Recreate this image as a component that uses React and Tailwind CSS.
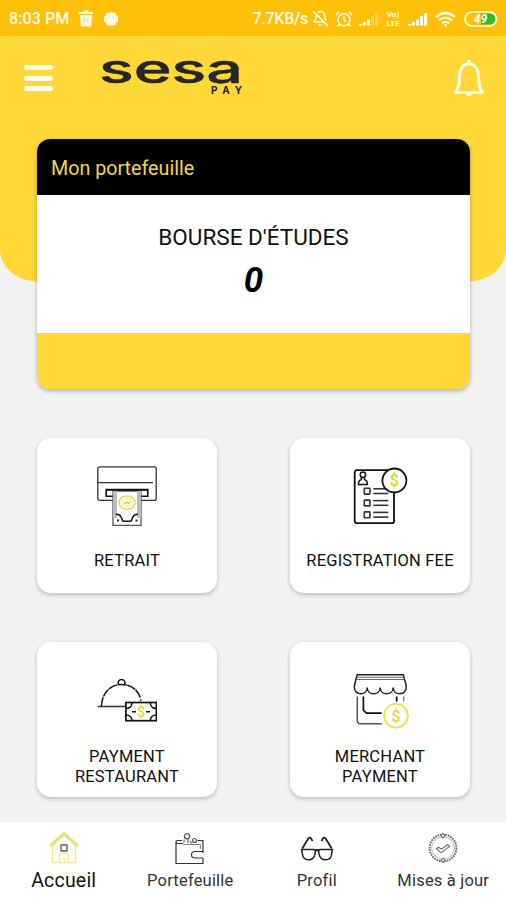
import { useState } from "react";
import { AlarmClock, BellOff } from "lucide-react";

const Dollar = ({ x, y, size = 14, fill = "#e3d21c" }) => (
  <text
    x={x}
    y={y}
    fontSize={size}
    fontWeight="500"
    textAnchor="middle"
    fill={fill}
    stroke="none"
    fontFamily="Roboto, sans-serif"
  >
    $
  </text>
);

const CashIcon = () => (
  <svg width="60" height="60" viewBox="0 0 60 60" fill="none" stroke="#333" strokeWidth="1.3">
    <rect x="0.8" y="0.8" width="58.4" height="33.6" rx="2" />
    <path d="M1 16.7h55" />
    <path d="M9.2 23.6h41.6v6.6H9.2z" stroke="#111" strokeWidth="1.6" />
    <path d="M16 25h28v34.3H16z" fill="#fff" stroke="#555" />
    <path d="M18 25v27M42 25v27" stroke="#bbb" strokeWidth="4" />
    <path d="M9 23.8h42" stroke="#111" strokeWidth="1.7" />
    <ellipse cx="30" cy="36.6" rx="8" ry="6.6" stroke="#e3dc4a" strokeWidth="1.6" />
    <ellipse cx="30" cy="36.6" rx="5" ry="4" stroke="#eee88a" strokeWidth="1" />
    <path d="M27 36.5l1.5 1 1.5-1.5 1.5 1.5 1.5-1.5" stroke="#d8cf30" />
    <path d="M19 48.2c3.5-.2 4.5 1 5.2 3l1.3 3.2q.4.9 1.4.9h6.2q1 0 1.4-.9l1.3-3.2c.7-2 1.7-3.2 5.2-3" stroke="#111" strokeWidth="1.5" />
    <path d="M20 54.5h2M38.5 54.5h2" stroke="#222" strokeWidth="1.8" />
  </svg>
);

const FormIcon = () => (
  <svg width="60" height="60" viewBox="0 0 60 60" fill="none" stroke="#111" strokeWidth="1.8">
    <rect x="4.7" y="4.2" width="39.3" height="53" rx="2" />
    <circle cx="12.9" cy="8.8" r="2.7" strokeWidth="1.5" />
    <path d="M11.3 11.3v2.2c-1.8.5-2.8 1.5-2.9 4.9h9c-.1-3.4-1.1-4.4-2.9-4.9v-2.2" strokeWidth="1.5" />
    {[25.2, 37, 48.8].map((y) => (
      <g key={y} stroke="#333">
        <rect x="14.3" y={y - 2.9} width="5.6" height="5.8" rx="0.5" strokeWidth="1.6" />
        <path d={`M23.3 ${y - 2.4}h15`} strokeWidth="1.6" />
        <path d={`M23.3 ${y + 2.3}h15`} strokeWidth="1.6" />
      </g>
    ))}
    <circle cx="44.4" cy="14.5" r="12" fill="#fff" />
    <Dollar x="44.4" y="20.2" size={16} />
  </svg>
);

const DishIcon = () => (
  <svg width="60" height="60" viewBox="0 0 60 60" fill="none" stroke="#111" strokeWidth="1.5">
    <path d="M0.7 36.5h28" stroke="#333" />
    <path d="M4.5 36c.2-12.5 8.7-21.6 20-21.6 9.3 0 16.3 5.5 18.7 13" strokeDasharray="9 .6" />
    <path d="M43.7 29.3v1.5" />
    <path d="M21.5 14.5c-1-2.8.7-5 3.1-5s4.1 2.2 3.1 5" />
    <rect x="28.9" y="32.5" width="30.5" height="18.2" fill="#fff" strokeWidth="1.7" />
    <path d="M29 38.5c3.5 0 6-2.3 6-6M59.3 38.5c-3.5 0-6-2.3-6-6M29 45c3.5 0 6 2.2 6 5.7M59.3 45c-3.5 0-6 2.2-6 5.7" strokeWidth="1.6" />
    <path d="M35 41.7h4M49 41.7h4" strokeWidth="1.6" />
    <Dollar x="43.9" y="46.6" size={14} fill="#d9e021" />
  </svg>
);

const ShopIcon = () => (
  <svg width="60" height="60" viewBox="0 0 60 60" fill="none" stroke="#222" strokeWidth="1.5">
    <path d="M4.3 16l2.8-11.3h46.2L56.3 16" />
    <path d="M6.5 7.3h47.2M6 9.5h48.2" stroke="#666" strokeWidth="1" />
    <path d="M4.3 15.5c-.4 5 2.3 8.3 6.4 8.3 3.9 0 6.5-2.6 6.5-6.3 0 3.7 2.7 6.3 6.5 6.3s6.5-2.6 6.5-6.3c0 3.7 2.7 6.3 6.5 6.3s6.5-2.6 6.5-6.3c0 3.7 2.7 6.3 6.5 6.3 4.4 0 7-3.3 6.6-8.3" />
    <path d="M7.3 26.5v25.2l2 2h22.4" stroke="#555" />
    <path d="M13.4 26.5v13.7l3 3h15.3M46.7 26.5v5" stroke="#111" strokeWidth="1.7" />
    <path d="M53.7 26.5v5" stroke="#888" />
    <circle cx="46" cy="45.7" r="11.8" stroke="#ece04f" strokeWidth="1.8" />
    <circle cx="46" cy="45.7" r="9.6" stroke="#f4efae" strokeWidth="0.7" />
    <Dollar x="46" y="51.5" size={16} fill="#efd429" />
  </svg>
);

const HomeIcon = () => (
  <svg width="34" height="36" viewBox="0 0 34 36" fill="none" stroke="#efea92" strokeWidth="1.5">
    <path d="M5.5 14.5v18h23v-18" />
    <path d="M3.5 16L17 3.7 30.5 16" stroke="#e4e283" strokeWidth="3.6" />
    <path d="M12.5 32.3V26q0-2.5 2.5-2.5h4q2.5 0 2.5 2.5v6.3M15.5 28.5h2.5v4" strokeWidth="1.3" />
    <path d="M14 15h6v6h-6z" stroke="#555" strokeWidth="1.3" />
  </svg>
);

const WalletIcon = () => (
  <svg width="34" height="36" viewBox="0 0 34 36" fill="none" stroke="#333" strokeWidth="1.2">
    <path d="M10 13.5H4.5q-1.5 0-1.5-1.5t1.5-1.5H9M3 12v21.5h27V28M24.5 10.5H30V23" />
    <path d="M10 14.5h17.5V19" stroke="#888" />
    <path d="M30 21.5h-8q-3.5 0-3.5 3.2T22 28h8" />
    <circle cx="14" cy="6.2" r="2.6" stroke="#555" />
    <circle cx="21.5" cy="10.5" r="2" stroke="#555" />
    <path d="M15 9v4M17 11l2 2.5M11 9.5v3" stroke="#666" />
  </svg>
);

const GlassesIcon = () => (
  <svg width="34" height="36" viewBox="0 0 34 36" fill="none" stroke="#222" strokeWidth="1.5">
    <path d="M2.3 18.5L8.3 8.5q1.5-1.7 3 .2l1.2 2.5M31.7 18.5l-6-10q-1.5-1.7-3 .2l-1.2 2.5" strokeWidth="1.8" />
    <path d="M1.5 19.5h12.8c1.2 0 1.2 1.7.7 4.3-.8 4-2.8 6-6.3 6-4 0-6.4-2.6-6.4-6.8zM32.5 19.5H19.7c-1.2 0-1.2 1.7-.7 4.3.8 4 2.8 6 6.3 6 4 0 6.4-2.6 6.4-6.8z" />
    <path d="M14.5 20.2h5" strokeWidth="2.2" />
  </svg>
);

const UpdateIcon = () => (
  <svg width="34" height="36" viewBox="0 0 34 36" fill="none" stroke="#666" strokeWidth="1.1">
    <circle cx="17" cy="18" r="13.4" strokeWidth="1.9" strokeDasharray="1.7 .9" />
    <circle cx="17" cy="18" r="11.3" stroke="#999" strokeWidth="0.7" />
    <path d="M17 3.5l2 2.2-2 2.3-2-2.3zM17 28l2 2.2-2 2.3-2-2.3z" fill="#fff" />
    <path d="M10.5 18.7l2-1.5 3 2 6.2-4.7 1.8 2-7.6 5.6q-1 .5-2-.2z" />
  </svg>
);

const SignalIcon = ({ weak }) => (
  <svg width="20" height="15" viewBox="0 0 20 15" fill="#fffbe6">
    <path d="M0 14.5v-1.5h3.4v1.5zM4 14.5V11h3v3.5zM8 14.5V8.5h3v6z" />
    <path d="M12 14.5V5h3v9.5z" opacity={weak ? 0.35 : 1} />
    <path d="M16 14.5V2h3.2v12.5z" opacity={weak ? 0.35 : 1} />
  </svg>
);

const tiles = [
  { label: "RETRAIT", Icon: CashIcon },
  { label: "REGISTRATION FEE", Icon: FormIcon },
  { label: "PAYMENT RESTAURANT", Icon: DishIcon },
  { label: "MERCHANT PAYMENT", Icon: ShopIcon },
];

const tabs = [
  { label: "Accueil", Icon: HomeIcon },
  { label: "Portefeuille", Icon: WalletIcon },
  { label: "Profil", Icon: GlassesIcon },
  { label: "Mises à jour", Icon: UpdateIcon },
];

function StatusBar() {
  return (
    <div className="flex h-9 items-center bg-[#ffc00a] pl-[9px] pr-2 pt-px text-[#fffbe6]">
      <span className="text-[16px] font-medium tracking-[0.1px]">8:03 PM</span>
      <svg className="ml-[10px]" width="14" height="17" viewBox="0 0 14 17" fill="currentColor">
        <path d="M0 2h4.5V0.5h5V2H14v2H0zM1 5h12l-.7 10.5q-.1 1-1.2 1H2.9q-1.1 0-1.2-1z" />
        <path d="M5.2 7.5v5.500M8.800 7.500v5.500" stroke="#ffd766" strokeWidth="1.3" />
      </svg>
      <svg className="ml-[11px]" width="14" height="16" viewBox="0 0 14 16" fill="currentColor">
        <path d="M1.5 4Q2 1.500 4 1.500h6q2 0 2.500 2.500V5H14v6h-1.500q-.5 3.500-3 3.500h-5q-2.500 0-3-3.500H0V5h1.500z" />
        <path d="M4 6h1.500M8.500 6H10" stroke="#ffd766" />
      </svg>

      <span className="ml-auto text-[16px] font-medium tracking-[-0.25px]">7.7KB/s</span>
      <BellOff className="ml-1" size={17} strokeWidth={2.2} />
      <AlarmClock className="ml-[6px]" size={18} strokeWidth={2.2} />
      <span className="ml-[6px] flex">
        <SignalIcon weak />
      </span>
      <span className="ml-[6px] grid w-4 justify-items-center text-[8px] font-bold leading-[9px]">
        <span>Vo)</span>
        <span>LTE</span>
      </span>
      <span className="ml-[7px] flex">
        <SignalIcon />
      </span>
      <svg className="ml-[7px]" width="21" height="16" viewBox="0 0 21 16" fill="none" stroke="currentColor" strokeWidth="2.2">
        <path d="M1 6Q10.5-2 20 6M4 9.3q6.5-5.4 13 0M7 12.3q3.5-2.8 7 0" />
        <circle cx="10.5" cy="14.2" r="1.2" fill="currentColor" stroke="none" />
      </svg>
      <svg className="ml-[8px]" width="34" height="16" viewBox="0 0 34 16">
        <path d="M17 2.5h9a5.5 5.5 0 0 1 0 11h-9z" fill="#35b82c" />
        <rect x="1" y="1" width="31.5" height="14" rx="7" fill="none" stroke="#fffbe6" strokeWidth="1.7" />
        <text x="16.5" y="12.3" fontSize="12" fontWeight="700" fontStyle="italic" textAnchor="middle" fill="#fffbe6">49</text>
      </svg>
    </div>
  );
}

function TopBar() {
  return (
    <div className="flex items-start justify-between pl-6 pr-5 pt-[22px]">
      <button aria-label="Menu" className="mt-[7px] flex flex-col gap-[5.5px]">
        <span className="h-[5px] w-[29px] rounded-sm bg-[#fffbe6]" />
        <span className="h-[5px] w-[29px] rounded-sm bg-[#fffbe6]" />
        <span className="h-[5px] w-[29px] rounded-sm bg-[#fffbe6]" />
      </button>
      <svg className="ml-[46px] mr-auto overflow-visible" width="150" height="42" viewBox="0 0 150 42" fill="#262626">
        <text
          x="0"
          y="24.7"
          fontSize="39"
          fontWeight="500"
          fontFamily="Inter, sans-serif"
          textLength="144"
          lengthAdjust="spacingAndGlyphs"
          stroke="#262626"
          strokeWidth="0.5"
        >
          sesa
        </text>
        <text x="112" y="36" fontSize="10" fontWeight="700" fontFamily="Inter, sans-serif" textLength="31">
          PAY
        </text>
      </svg>
      <button aria-label="Notifications">
        <svg width="34" height="40" viewBox="0 0 34 40" fill="none" stroke="#fffbe6" strokeWidth="3">
          <path d="M3.5 34.5c2.7-3.5 3.8-7 3.8-13.5C7.3 11.5 11 5.7 17 5.7S26.7 11.5 26.7 21c0 6.5 1.1 10 3.8 13.5z" strokeLinejoin="round" />
          <path d="M17 2v3.5" strokeWidth="3.5" />
          <path d="M13.5 35h7q-.6 3-3.5 3t-3.5-3z" fill="#fffbe6" stroke="none" />
        </svg>
      </button>
    </div>
  );
}

export default function App() {
  const [active, setActive] = useState(0);

  return (
    <div className="flex h-[900px] w-[506px] flex-col overflow-hidden bg-[#f2f2f0] font-['Roboto',sans-serif] text-[#111]">
      <header className="h-[282px] shrink-0 overflow-hidden rounded-[0_0_40px_40px/0_0_32px_32px] bg-[#ffd838]">
        <StatusBar />
        <TopBar />
      </header>

      <main className="-mt-[143px] flex-1 pl-[37px] pr-9">
        {/* Wallet card */}
        <section className="flex h-[250px] flex-col overflow-hidden rounded-[13px] bg-white shadow-[0_2px_4px_rgba(0,0,0,0.28)]">
          <div className="flex h-14 items-center bg-black px-[14px] pt-[3px] text-[19.7px] text-[#f3d64a]">
            Mon portefeuille
          </div>
          <div className="flex flex-1 flex-col items-center pt-[27px]">
            <p className="text-[22.5px] leading-[30px]">BOURSE D'ÉTUDES</p>
            <p className="mt-[9px] text-[35px] font-bold italic leading-[40px] text-black">0</p>
          </div>
          <div className="h-14 bg-[#ffd838]" />
        </section>

        {/* Services */}
        <section className="mt-[49px] grid grid-cols-[180px_180px] justify-between gap-y-[49px]">
          {tiles.map(({ label, Icon }, i) => (
            <button
              key={label}
              className="flex h-[155px] flex-col items-center rounded-[14px] bg-white pt-7 shadow-[0_2px_4px_rgba(0,0,0,0.22)]"
            >
              <Icon />
              <span
                className={`text-center text-[16.5px] leading-5 tracking-[0.2px] ${
                  i < 2 ? "mt-[25px]" : "mt-[17px] w-[120px]"
                }`}
              >
                {label}
              </span>
            </button>
          ))}
        </section>
      </main>

      <nav className="grid h-[78px] shrink-0 grid-cols-4 bg-white">
        {tabs.map(({ label, Icon }, i) => (
          <button key={label} onClick={() => setActive(i)} className="flex flex-col items-center pl-px pt-2">
            <Icon />
            <span
              className={`mt-[3px] whitespace-nowrap leading-6 ${
                active === i ? "text-[19.5px] tracking-[0.2px]" : "text-[16.5px] tracking-[0.2px] text-[#333]"
              }`}
            >
              {label}
            </span>
          </button>
        ))}
      </nav>
    </div>
  );
}
